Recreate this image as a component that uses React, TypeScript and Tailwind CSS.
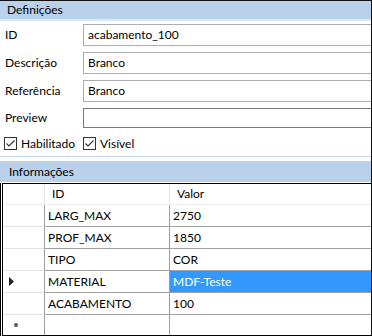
const linhas = [
  { id: "LARG_MAX", valor: "2750" },
  { id: "PROF_MAX", valor: "1850" },
  { id: "TIPO", valor: "COR" },
  { id: "MATERIAL", valor: "MDF-Teste", atual: true },
  { id: "ACABAMENTO", valor: "100" },
];

function Campo({ label, valor, ultimo }: { label: string; valor: string; ultimo?: boolean }) {
  return (
    <div className="flex items-center h-[22px] mb-[6px]">
      <span className="w-[83px] pl-[5px]">{label}</span>
      <div
        className={
          ultimo
            ? "flex-1 h-[20px] border border-r-0 border-[#7a7a7a] pl-[4px] flex items-center"
            : "flex-1 h-[22px] border border-r-0 border-[#abadb3] pl-[4px] flex items-center"
        }
      >
        {valor}
      </div>
    </div>
  );
}

function Check({ label }: { label: string }) {
  return (
    <div className="flex items-center gap-[4px]">
      <svg width="13" height="13" viewBox="0 0 13 13">
        <rect x="0.5" y="0.5" width="12" height="12" fill="#fff" stroke="#333" />
        <path d="M2.5 6.5 L5 9 L10.5 3.5" fill="none" stroke="#333" strokeWidth="1.1" />
      </svg>
      <span>{label}</span>
    </div>
  );
}

export default function App() {
  return (
    <div
      className="w-[372px] h-[336px] bg-white border-t border-r border-[#111] overflow-hidden text-[12px] text-black leading-none"
      style={{ fontFamily: "Lato, 'Liberation Sans', sans-serif" }}
    >
      {/* Definições */}
      <div className="h-[18px] bg-[#b9d1ea] pl-[7px] flex items-center">Definições</div>
      <div className="h-[2px] bg-[#dce8f4]" />
      <div className="pt-[3px]">
        <Campo label="ID" valor="acabamento_100" />
        <Campo label="Descrição" valor="Branco" />
        <Campo label="Referência" valor="Branco" />
        <div className="flex items-center h-[20px]">
          <span className="w-[83px] pl-[5px]">Preview</span>
          <div className="flex-1 h-[20px] border border-r-0 border-[#7a7a7a]" />
        </div>
        <div className="flex items-center h-[13px] mt-[9px] pl-[4px]">
          <div className="w-[79px]">
            <Check label="Habilitado" />
          </div>
          <Check label="Visível" />
        </div>
      </div>

      {/* Informações */}
      <div className="mt-[6px] border-t border-[#c5d9ee] pt-[4px]">
        <div className="h-[21px] bg-[#b9d1ea] pl-[9px] flex items-center">Informações</div>
        <div className="h-[1px]" />
        <div className="border-l border-black pl-[1px]">
          <div className="border-l border-t border-b border-black h-[153px] flex flex-col">
            {/* cabeçalho */}
            <div className="flex h-[21px] border-b border-[#efefef] shrink-0">
              <div className="w-[42px] border-r border-[#e5e5e5]" />
              <div className="w-[125px] border-r border-[#e5e5e5] pl-[7px] flex items-center">ID</div>
              <div className="flex-1 pl-[7px] flex items-center">Valor</div>
            </div>
            {linhas.map((l, i) => (
              <div key={i} className="flex h-[22px] shrink-0">
                <div className="w-[42px] border-r border-b border-[#a0a0a0] border-b-[#e3e3e3] flex items-center pl-[6px]">
                  {l.atual && (
                    <svg width="6" height="9" viewBox="0 0 6 9">
                      <path d="M0 0 L5 4.5 L0 9 Z" fill="#222" />
                    </svg>
                  )}
                </div>
                <div className="w-[125px] border-r border-b border-[#a0a0a0] pl-[3px] flex items-center">{l.id}</div>
                <div
                  className={
                    l.atual
                      ? "flex-1 border-b border-[#a0a0a0] pl-[3px] flex items-center bg-[#3399ff] text-white"
                      : "flex-1 border-b border-[#a0a0a0] pl-[3px] flex items-center"
                  }
                >
                  {l.valor}
                </div>
              </div>
            ))}
            <div className="flex flex-1">
              <div className="w-[42px] border-r border-[#a0a0a0] flex items-center pl-[10px]">
                <svg width="6" height="6" viewBox="0 0 6 6">
                  <circle cx="3" cy="3" r="2" fill="#555" />
                </svg>
              </div>
              <div className="w-[125px] border-r border-[#a0a0a0]" />
              <div className="flex-1" />
            </div>
          </div>
        </div>
      </div>
    </div>
  );
}
